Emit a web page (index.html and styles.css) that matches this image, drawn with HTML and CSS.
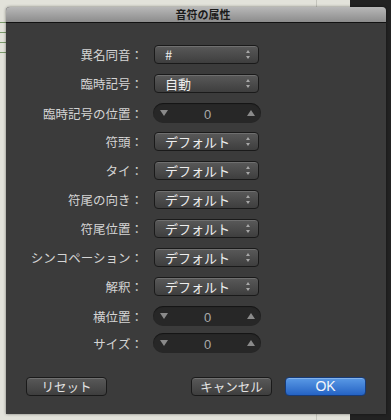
FILE: index.html
```html
<!DOCTYPE html>
<html lang="ja">
<head>
  <meta charset="UTF-8" />
  <title>音符の属性</title>
  <link rel="stylesheet" href="styles.css">
</head>
<body>
  <div class="desk">
    <div class="desk-dark"></div>
    <div class="desk-line"></div>
    <div class="staff">
      <span></span><span></span><span></span><span></span>
    </div>

    <div class="dialog">
      <div class="titlebar">音符の属性</div>

      <div class="form">
        <div class="row">
          <label>異名同音：</label>
          <div class="popup">#<i class="arrows"></i></div>
        </div>
        <div class="row">
          <label>臨時記号：</label>
          <div class="popup">自動<i class="arrows"></i></div>
        </div>
        <div class="row">
          <label>臨時記号の位置：</label>
          <div class="stepper"><b class="tri down"></b><span>0</span><b class="tri up"></b></div>
        </div>
        <div class="row">
          <label>符頭：</label>
          <div class="popup">デフォルト<i class="arrows"></i></div>
        </div>
        <div class="row">
          <label>タイ：</label>
          <div class="popup">デフォルト<i class="arrows"></i></div>
        </div>
        <div class="row">
          <label>符尾の向き：</label>
          <div class="popup">デフォルト<i class="arrows"></i></div>
        </div>
        <div class="row">
          <label>符尾位置：</label>
          <div class="popup">デフォルト<i class="arrows"></i></div>
        </div>
        <div class="row">
          <label>シンコペーション：</label>
          <div class="popup">デフォルト<i class="arrows"></i></div>
        </div>
        <div class="row">
          <label>解釈：</label>
          <div class="popup">デフォルト<i class="arrows"></i></div>
        </div>
        <div class="row">
          <label>横位置：</label>
          <div class="stepper"><b class="tri down"></b><span>0</span><b class="tri up"></b></div>
        </div>
        <div class="row tight">
          <label>サイズ：</label>
          <div class="stepper"><b class="tri down"></b><span>0</span><b class="tri up"></b></div>
        </div>
      </div>

      <div class="actions">
        <button class="btn reset">リセット</button>
        <div class="right">
          <button class="btn">キャンセル</button>
          <button class="btn ok">OK</button>
        </div>
      </div>
    </div>
  </div>
</body>
</html>
```

FILE: styles.css
```css
body {
  margin: 0;
  background: #dcdcd4;
  font-family: "Noto Sans CJK JP", "Noto Sans", sans-serif;
}
.desk {
  position: relative;
  width: 391px;
  height: 420px;
  overflow: hidden;
  background: #e2e2da;
}
.desk-dark {
  position: absolute;
  left: 350px;
  top: 0;
  width: 41px;
  height: 420px;
  background: #222;
}
.desk-line {
  position: absolute;
  left: 316px;
  top: 0;
  width: 1px;
  height: 420px;
  background: #c4c4bc;
}
.staff {
  position: absolute;
  left: 0;
  top: 22px;
  width: 6px;
}
.staff span {
  display: block;
  height: 1px;
  margin-bottom: 9px;
  background: #7a9a6a;
}

/* dialog window */
.dialog {
  position: absolute;
  left: 6px;
  top: 7px;
  width: 380px;
  height: 407px;
  background: #3b3b3b;
  border-radius: 4px 4px 0 0;
  box-shadow: 0 0 3px rgba(0, 0, 0, 0.5);
}
.titlebar {
  height: 15px;
  line-height: 15px;
  border-radius: 4px 4px 0 0;
  border-bottom: 1px solid #111;
  background: linear-gradient(#b8b8b8, #8c8c8c);
  color: #1a1a1a;
  font-size: 11px;
  font-weight: bold;
  text-align: center;
  padding-left: 14px;
}

.form {
  display: flex;
  flex-direction: column;
  gap: 10px;
  padding-top: 22px;
}
.row {
  display: grid;
  grid-template-columns: 137px 107px;
  column-gap: 10px;
  align-items: center;
  height: 19px;
}
.row.tight { margin-top: -2px; }
.row label {
  text-align: right;
  color: #d4d4d4;
  font-size: 12.5px;
  white-space: nowrap;
}

.popup {
  position: relative;
  margin-left: 1px;
  width: 103px;
  height: 17px;
  line-height: 17px;
  padding-left: 10px;
  box-sizing: border-box;
  width: 105px;
  border: 1px solid #1a1a1a;
  border-radius: 4px;
  background: linear-gradient(#595959, #3e3e3e);
  box-shadow: inset 0 1px 0 rgba(255, 255, 255, 0.14);
  color: #eee;
  font-size: 13px;
  height: 19px;
}
.arrows {
  position: absolute;
  right: 7px;
  top: 4px;
  width: 5px;
  height: 9px;
}
.arrows::before, .arrows::after {
  content: "";
  position: absolute;
  left: 0;
  border-left: 2.5px solid transparent;
  border-right: 2.5px solid transparent;
}
.arrows::before { top: 0; border-bottom: 3px solid #a8a8a8; }
.arrows::after { bottom: 0; border-top: 3px solid #a8a8a8; }

.stepper {
  display: flex;
  align-items: center;
  justify-content: space-between;
  width: 108px;
  height: 20px;
  padding: 0 6px 0 7px;
  box-sizing: border-box;
  border-radius: 10px;
  background: #272727;
  box-shadow: inset 0 1px 1px rgba(0, 0, 0, 0.5);
}
.stepper span {
  color: #aaa;
  font-family: "Liberation Sans", sans-serif;
  font-size: 13px;
  margin-top: 2px;
}
.tri {
  width: 0;
  height: 0;
  border-left: 4px solid transparent;
  border-right: 4px solid transparent;
}
.tri.down { border-top: 6px solid #8a8a8a; }
.tri.up { border-bottom: 6px solid #8a8a8a; }

/* bottom buttons */
.actions {
  display: flex;
  justify-content: space-between;
  padding: 25px 20px 0 20px;
}
.right {
  display: flex;
  gap: 13px;
}
.btn {
  width: 81px;
  height: 19px;
  padding: 0;
  border: 1px solid #1a1a1a;
  border-radius: 4px;
  background: linear-gradient(#595959, #3e3e3e);
  box-shadow: inset 0 1px 0 rgba(255, 255, 255, 0.14);
  color: #e4e4e4;
  font-family: "Noto Sans CJK JP", sans-serif;
  font-size: 12.5px;
  line-height: 17px;
}
.btn.ok {
  border-color: #173b78;
  background: linear-gradient(#5a9ae6, #2563c4);
  box-shadow: inset 0 1px 0 rgba(255, 255, 255, 0.25);
  color: #f4f6fa;
  font-family: "Liberation Sans", sans-serif;
  font-size: 14px;
}
```
